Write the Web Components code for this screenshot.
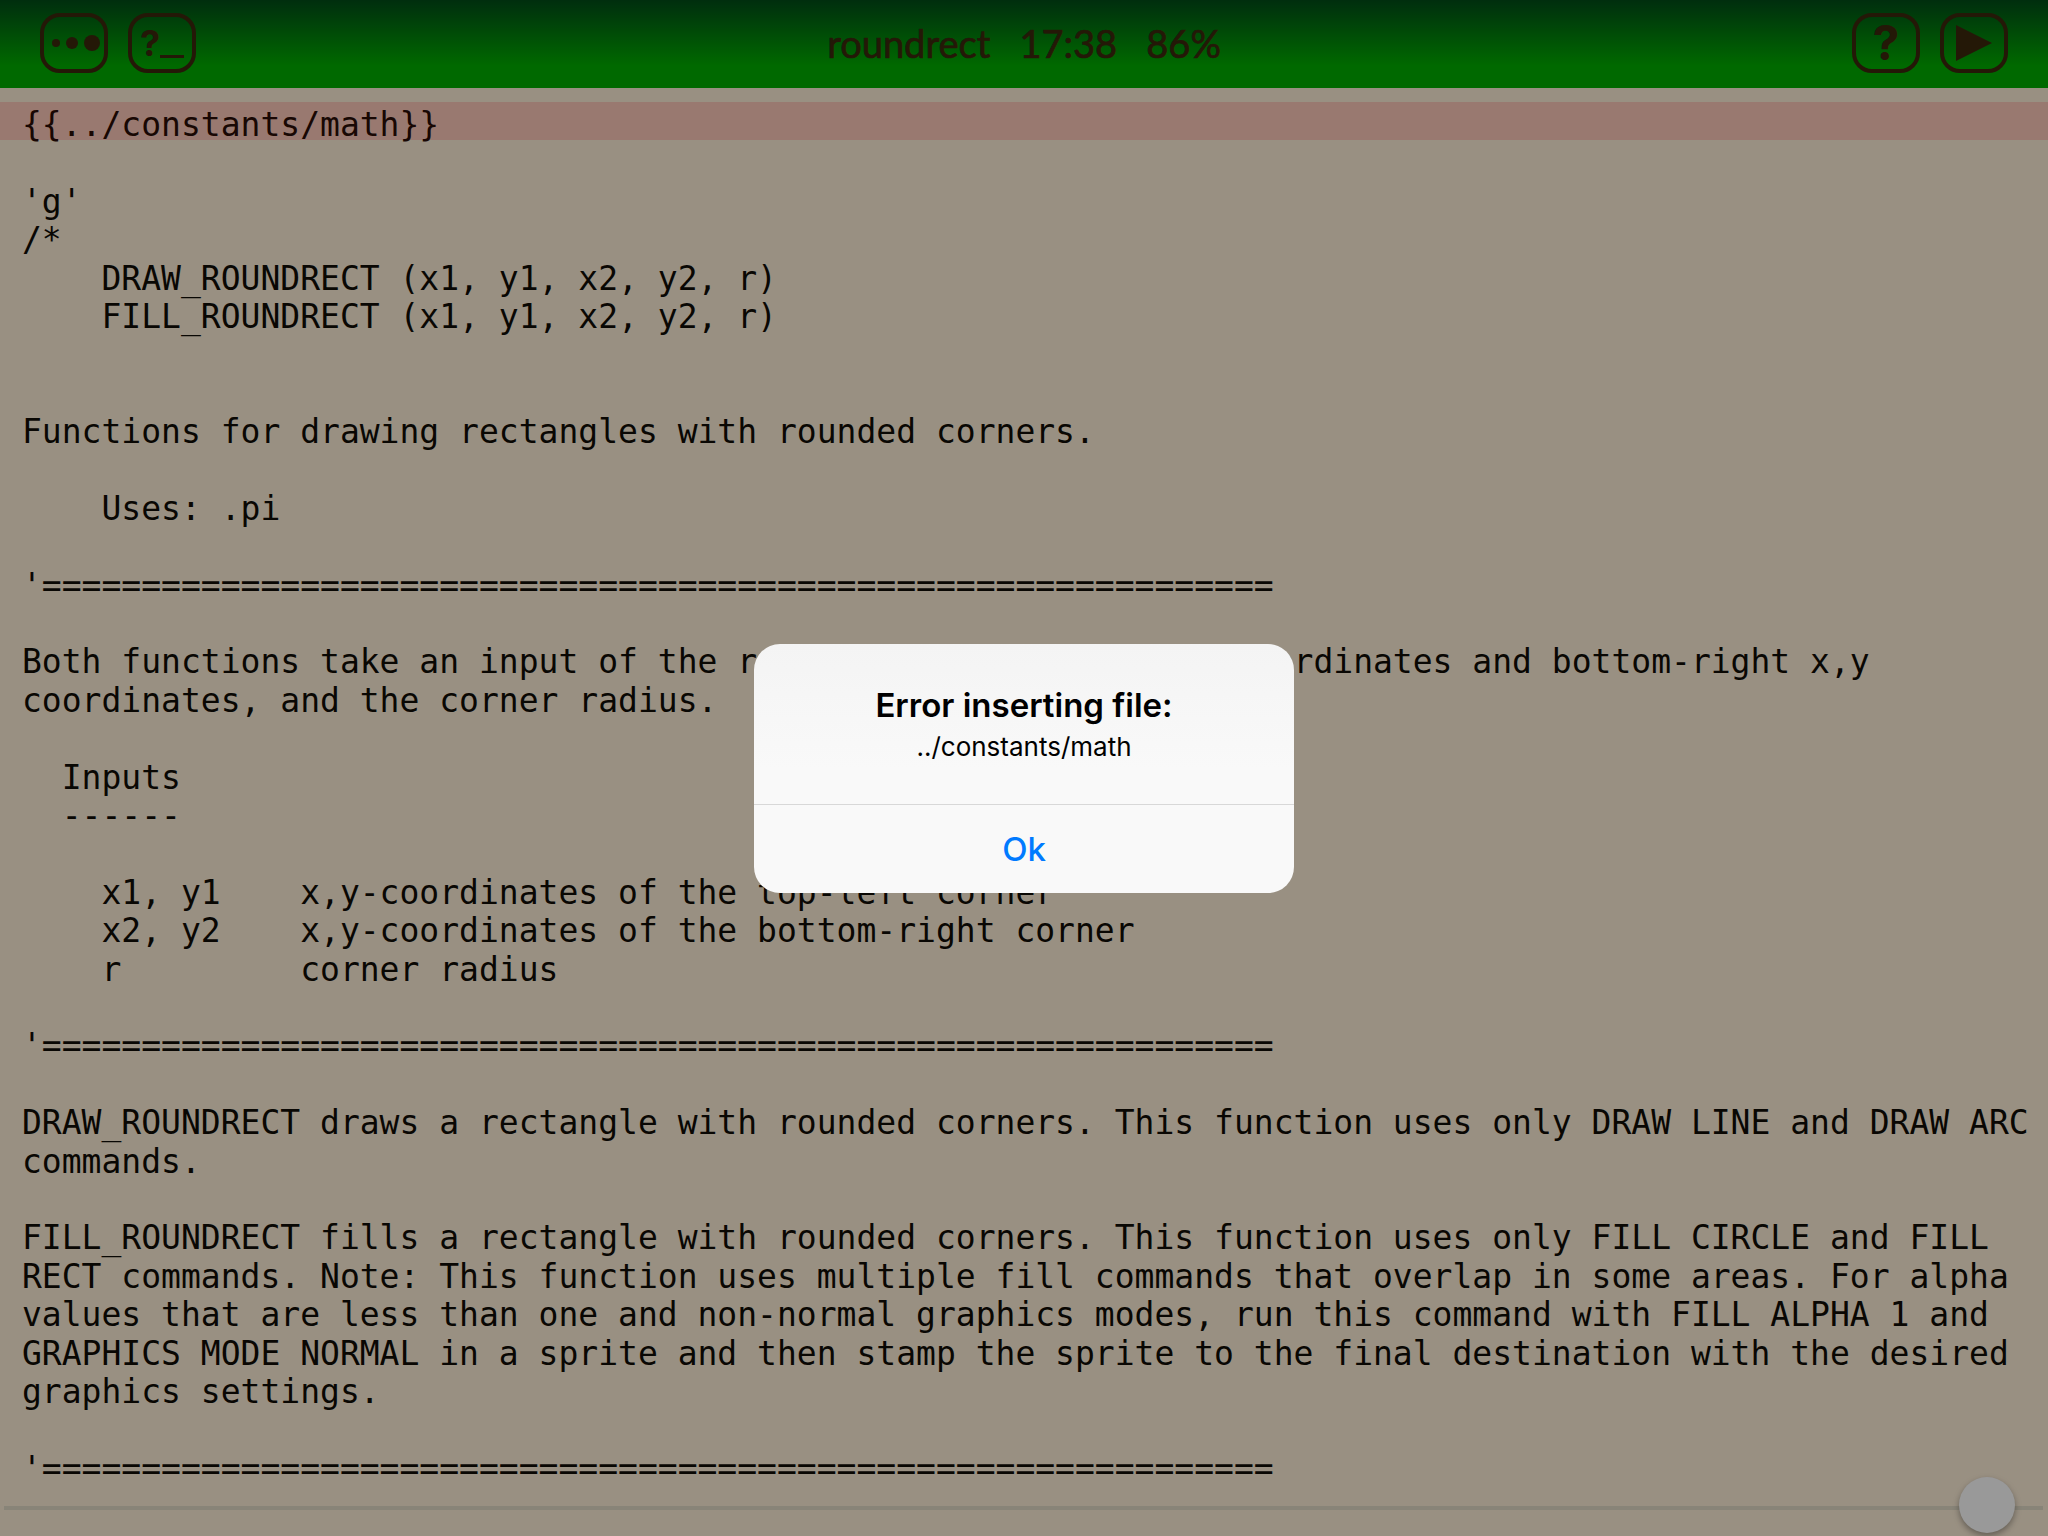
<!DOCTYPE html>
<html lang="en">
<head>
<meta charset="utf-8">
<title>roundrect</title>
<style>
  html, body { margin: 0; height: 100%; }
  body { width: 2048px; height: 1536px; overflow: hidden; background: #fff0d9; }
</style>
</head>
<body>
<editor-screen>
  <editor-toolbar slot="toolbar" caption="roundrect   17:38   86%"></editor-toolbar>
  <code-view slot="code">
    <code-line error>{{../constants/math}}</code-line>
    <code-line></code-line>
    <code-line>'g'</code-line>
    <code-line>/*</code-line>
    <code-line>    DRAW_ROUNDRECT (x1, y1, x2, y2, r)</code-line>
    <code-line>    FILL_ROUNDRECT (x1, y1, x2, y2, r)</code-line>
    <code-line></code-line>
    <code-line></code-line>
    <code-line>Functions for drawing rectangles with rounded corners.</code-line>
    <code-line></code-line>
    <code-line>    Uses: .pi</code-line>
    <code-line></code-line>
    <code-line>'==============================================================</code-line>
    <code-line></code-line>
    <code-line>Both functions take an input of the rectangle's top-left x,y coordinates and bottom-right x,y</code-line>
    <code-line>coordinates, and the corner radius.</code-line>
    <code-line></code-line>
    <code-line>  Inputs</code-line>
    <code-line>  ------</code-line>
    <code-line></code-line>
    <code-line>    x1, y1    x,y-coordinates of the top-left corner</code-line>
    <code-line>    x2, y2    x,y-coordinates of the bottom-right corner</code-line>
    <code-line>    r         corner radius</code-line>
    <code-line></code-line>
    <code-line>'==============================================================</code-line>
    <code-line></code-line>
    <code-line>DRAW_ROUNDRECT draws a rectangle with rounded corners. This function uses only DRAW LINE and DRAW ARC</code-line>
    <code-line>commands.</code-line>
    <code-line></code-line>
    <code-line>FILL_ROUNDRECT fills a rectangle with rounded corners. This function uses only FILL CIRCLE and FILL</code-line>
    <code-line>RECT commands. Note: This function uses multiple fill commands that overlap in some areas. For alpha</code-line>
    <code-line>values that are less than one and non-normal graphics modes, run this command with FILL ALPHA 1 and</code-line>
    <code-line>GRAPHICS MODE NORMAL in a sprite and then stamp the sprite to the final destination with the desired</code-line>
    <code-line>graphics settings.</code-line>
    <code-line></code-line>
    <code-line>'==============================================================</code-line>
  </code-view>
  <editor-slider slot="slider"></editor-slider>
  <alert-dialog slot="dialog" heading="Error inserting file:" action="Ok">../constants/math</alert-dialog>
</editor-screen>

<script>
// Pantalla completa: barra, codigo, slider y capa oscura con la alerta encima
class EditorScreen extends HTMLElement {
  constructor() {
    super();
    this.attachShadow({ mode: 'open' });
    this.shadowRoot.innerHTML = `
      <style>
        :host { display: flex; flex-direction: column; position: relative; width: 2048px; height: 1536px; overflow: hidden; background: #fff0d9; }
        .scrim { position: absolute; inset: 0; background: rgba(0, 0, 0, .4); display: flex; justify-content: center; align-items: flex-start; padding-top: 644px; box-sizing: border-box; }
      </style>
      <slot name="toolbar"></slot>
      <slot name="code"></slot>
      <slot name="slider"></slot>
      <div class="scrim"><slot name="dialog"></slot></div>`;
  }
}

// Boton cuadrado redondeado de la barra
class ToolButton extends HTMLElement {
  constructor() {
    super();
    this.attachShadow({ mode: 'open' });
    this.shadowRoot.innerHTML = `
      <style>
        :host { display: flex; align-items: center; justify-content: center; box-sizing: border-box; width: 68px; height: 60px; border: 4px solid #3c280d; border-radius: 20px; color: #3c280d; }
      </style>
      <slot></slot>`;
  }
}

class EditorToolbar extends HTMLElement {
  constructor() {
    super();
    this.attachShadow({ mode: 'open' });
    this.shadowRoot.innerHTML = `
      <style>
        :host { display: flex; align-items: center; justify-content: space-between; height: 88px; padding: 0 40px 2px; box-sizing: border-box; flex: none;
                background: linear-gradient(#004d18 0%, #00b000 75%, #00b000 100%); color: #3c280d; }
        .group { display: flex; gap: 20px; width: 300px; }
        .end { justify-content: flex-end; }
        .caption { font: 38px Lato, "DejaVu Sans", sans-serif; white-space: pre; -webkit-text-stroke: .7px #3c280d; }
        .glyph { font: 700 48px/48px Inter, "Liberation Sans", sans-serif; }
        .prompt { display: flex; align-items: flex-end; }
        .small { font: 700 36px/30px Inter, "Liberation Sans", sans-serif; }
        .bar { width: 24px; height: 3px; background: #3c280d; }
        svg { display: block; }
      </style>
      <div class="group">
        <tool-button>
          <svg width="60" height="20" viewBox="0 0 60 20" fill="#3c280d"><circle cx="12" cy="10" r="4"/><circle cx="28" cy="10" r="6"/><circle cx="48" cy="10" r="8"/></svg>
        </tool-button>
        <tool-button>
          <div class="prompt"><span class="small">?</span><span class="bar"></span></div>
        </tool-button>
      </div>
      <span class="caption"></span>
      <div class="group end">
        <tool-button><span class="glyph">?</span></tool-button>
        <tool-button>
          <svg width="36" height="36" viewBox="0 0 36 36" fill="#3c280d"><polygon points="0,0 36,18 0,36"/></svg>
        </tool-button>
      </div>`;
  }
  connectedCallback() {
    this.shadowRoot.querySelector('.caption').textContent = this.getAttribute('caption');
  }
}

class CodeView extends HTMLElement {
  constructor() {
    super();
    this.attachShadow({ mode: 'open' });
    this.shadowRoot.innerHTML = `
      <style>
        :host { display: block; flex: 1; padding-top: 14px; overflow: hidden; color: #100c06; font: 33px/46.4px "DejaVu Sans Mono", monospace; }
      </style>
      <slot></slot>`;
  }
}

// Linea de codigo; con el atributo error sale resaltada
class CodeLine extends HTMLElement {
  constructor() {
    super();
    this.attachShadow({ mode: 'open' });
    this.shadowRoot.innerHTML = `
      <style>
        :host { display: block; padding-left: 22px; height: 38.4px; }
        :host([error]) { background: #ffcabb; color: #2a0d06; }
        slot { white-space: pre; }
      </style>
      <slot></slot>`;
  }
}

class EditorSlider extends HTMLElement {
  constructor() {
    super();
    this.attachShadow({ mode: 'open' });
    this.shadowRoot.innerHTML = `
      <style>
        :host { display: block; position: absolute; left: 4px; top: 1506px; width: 2039px; height: 4px; background: #e3dcc8; }
        .thumb { position: absolute; left: 1955px; top: -29px; width: 56px; height: 56px; border-radius: 50%; background: #fff; box-shadow: 0 3px 6px rgba(0, 0, 0, .35); }
      </style>
      <div class="thumb"></div>`;
  }
}

class AlertDialog extends HTMLElement {
  constructor() {
    super();
    this.attachShadow({ mode: 'open' });
    this.shadowRoot.innerHTML = `
      <style>
        :host { display: block; width: 540px; height: 249px; border-radius: 26px; overflow: hidden; font-family: Inter, Roboto, sans-serif;
                background: linear-gradient(#f4f4f4, #f9f9f9 50%); color: #000; text-align: center; }
        .body { height: 161px; box-sizing: border-box; padding-top: 41px; border-bottom: 1px solid #d8d8d8; }
        h2 { margin: 0; font-size: 33px; line-height: 40px; font-weight: 600; }
        p { margin: 4px 0 0; font-size: 26px; line-height: 36px; font-weight: 400; }
        button { display: block; width: 100%; height: 88px; border: 0; padding: 0; background: none; font: 500 33px Inter, Roboto, sans-serif; color: #007aff; }
      </style>
      <div class="body"><h2></h2><p><slot></slot></p></div>
      <button></button>`;
  }
  connectedCallback() {
    this.shadowRoot.querySelector('h2').textContent = this.getAttribute('heading');
    this.shadowRoot.querySelector('button').textContent = this.getAttribute('action');
  }
}

customElements.define('editor-screen', EditorScreen);
customElements.define('tool-button', ToolButton);
customElements.define('editor-toolbar', EditorToolbar);
customElements.define('code-view', CodeView);
customElements.define('code-line', CodeLine);
customElements.define('editor-slider', EditorSlider);
customElements.define('alert-dialog', AlertDialog);
</script>
</body>
</html>
